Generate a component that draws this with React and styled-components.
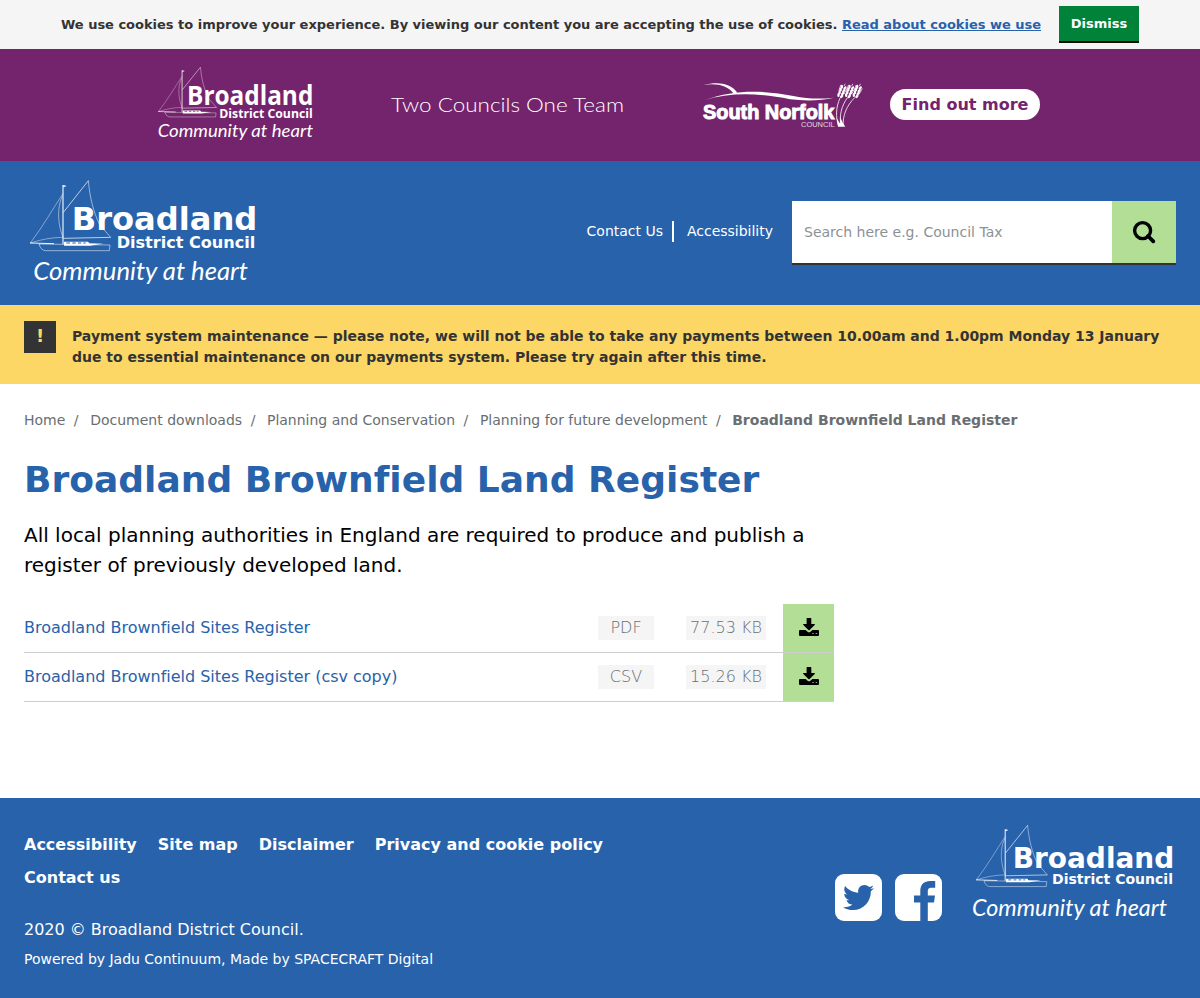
import React from "react";
import styled, { createGlobalStyle } from "styled-components";
import { FaTwitter } from "react-icons/fa";

const BLUE = "#2862ab";
const PURPLE = "#74246c";
const GREEN = "#b2df95";

const GlobalStyle = createGlobalStyle`
  *, *::before, *::after { box-sizing: border-box; }
  body { margin: 0; background: #fff; color: #000; font-family: "DejaVu Sans", sans-serif; font-size: 16px; line-height: 24px; }
  a { color: inherit; text-decoration: none; }
  svg { display: block; flex: none; }
`;

const Page = styled.div`
  display: flex;
  flex-direction: column;
  min-height: 998px;
`;

const CookieBar = styled.div`
  display: flex;
  justify-content: center;
  height: 49px;
  padding-top: 6px;
  background: #f5f5f5;
  color: #333;
  font-size: 13px;
  font-weight: bold;
  letter-spacing: -0.012px;
  line-height: 37px;
  white-space: nowrap;
`;

const CookieLink = styled.a`
  color: ${BLUE};
  text-decoration: underline;
`;

const DismissButton = styled.button`
  width: 80px;
  height: 37px;
  margin-left: 18px;
  padding: 0;
  border: 0;
  border-bottom: 2px solid #0b0c0c;
  background: #00823b;
  color: #fff;
  font: bold 13px "DejaVu Sans", sans-serif;
`;

const TeamBanner = styled.section`
  display: flex;
  align-items: flex-start;
  height: 112px;
  padding: 6px 0 0 140px;
  background: ${PURPLE};
`;

const TeamTitle = styled.svg`
  margin: 20px 0 0 50px;
`;

const NorfolkLogo = styled.svg`
  margin: 15px 0 0 50px;
`;

const FindOutMore = styled.a`
  width: 150px;
  height: 31px;
  margin: 34px 0 0 20px;
  border-radius: 16px;
  background: #fff;
  color: ${PURPLE};
  font-weight: bold;
  line-height: 31px;
  text-align: center;
`;

const Header = styled.header`
  display: flex;
  align-items: flex-start;
  height: 144px;
  padding: 9px 24px 0 20px;
  background: ${BLUE};
`;

const HeaderLinks = styled.nav`
  display: flex;
  margin: 51px 19px 0 auto;
  color: #fff;
  font-size: 14px;
  letter-spacing: -0.01px;
  line-height: 21px;

  a + a { margin-left: 9px; padding-left: 13px; border-left: 2px solid #fff; }
`;

const SearchBox = styled.form`
  display: flex;
  width: 384px;
  height: 64px;
  margin-top: 31px;
  border-bottom: 2px solid #333;
`;

const SearchInput = styled.input`
  flex: 1;
  min-width: 0;
  padding: 0 12px;
  border: 0;
  border-radius: 0;
  background: #fff;
  font: 14px "DejaVu Sans", sans-serif;

  &::placeholder { color: #8b9296; opacity: 1; }
`;

const SearchButton = styled.button`
  display: flex;
  align-items: center;
  justify-content: center;
  width: 64px;
  padding: 0;
  border: 0;
  background: ${GREEN};
`;

const Alert = styled.div`
  display: flex;
  align-items: flex-start;
  height: 79px;
  padding: 16px 24px 0;
  background: #fdd766;
`;

const AlertMark = styled.span`
  width: 32px;
  height: 32px;
  margin-right: 16px;
  background: #333;
  color: #fdd766;
  font-size: 18px;
  font-weight: bold;
  line-height: 30px;
  text-align: center;
`;

const AlertText = styled.p`
  flex: 1;
  margin: 5px 0 0;
  color: #333;
  font-size: 14px;
  font-weight: bold;
  letter-spacing: -0.011px;
  line-height: 21px;
`;

const Main = styled.main`
  flex: 1;
  padding: 26px 24px 0;
`;

const Breadcrumbs = styled.ol`
  display: flex;
  margin: 0;
  padding: 0;
  list-style: none;
  color: #696e72;
  font-size: 14px;
  line-height: 21px;
`;

const Crumb = styled.li`
  font-weight: ${(p) => (p.$current ? "bold" : "normal")};

  &:not(:last-child)::after { content: "/"; margin: 0 11.6px 0 8.5px; }
`;

const Title = styled.h1`
  margin: 25px 0 0;
  color: ${BLUE};
  font-size: 36px;
  letter-spacing: 0.02px;
  line-height: 48px;
`;

const Intro = styled.p`
  width: 810px;
  margin: 16px 0 24px;
  font-size: 20px;
  letter-spacing: -0.01px;
  line-height: 30px;
`;

const FileList = styled.ul`
  width: 810px;
  margin: 0;
  padding: 0;
  list-style: none;
`;

const FileRow = styled.li`
  display: flex;
  align-items: center;
  height: 49px;
  border-bottom: 1px solid #ccced0;
`;

const FileName = styled.a`
  flex: 1;
  color: ${BLUE};
  letter-spacing: -0.01px;
`;

const FileTag = styled.span`
  width: ${(p) => p.$width}px;
  margin-right: ${(p) => p.$gap}px;
  background: #f5f5f5;
  color: #696e72;
  font-weight: 200;
  text-align: center;
  white-space: nowrap;
`;

const DownloadButton = styled.a`
  display: flex;
  align-items: flex-start;
  justify-content: center;
  width: 51px;
  height: 48px;
  padding-top: 13px;
  background: ${GREEN};
`;

const Footer = styled.footer`
  display: flex;
  align-items: flex-start;
  height: 200px;
  padding: 17px 10px 0 24px;
  background: ${BLUE};
  color: #fff;
`;

const FooterText = styled.div`
  width: 620px;
  padding-top: 13px;
`;

const FooterLinks = styled.nav`
  display: flex;
  flex-wrap: wrap;
  column-gap: 21px;
  font-weight: bold;
  line-height: 33px;
`;

const Copyright = styled.p`
  margin: 24px 0 0;
  letter-spacing: -0.01px;
`;

const Powered = styled.p`
  margin: 7px 0 0;
  font-size: 14px;
  letter-spacing: -0.01px;
  line-height: 21px;
`;

const Socials = styled.div`
  display: flex;
  gap: 12.5px;
  margin: 59px 18px 0 auto;
`;

const SocialTile = styled.a`
  display: flex;
  align-items: ${(p) => (p.$bottom ? "flex-end" : "center")};
  justify-content: center;
  width: 47.5px;
  height: 47px;
  border-radius: 9px;
  background: #fff;
  color: ${BLUE};
`;

function Boat({ transform }) {
  return (
    <g transform={transform} fill="none" stroke="#fff" strokeWidth="2.6">
      <path d="M129 45V222" strokeWidth="4" opacity=".8" />
      <path d="M130 45l10 3-10 4z" fill="#fff" stroke="none" />
      <path d="M130 127L205 32" opacity=".8" />
      <path d="M205 32C209 80 220 126 239 164L272 202" opacity=".6" />
      <path d="M129 70C98 118 68 170 31 219C65 208 97 202 129 202" opacity=".5" />
      <path d="M127 78C108 118 116 171 129 202" opacity=".55" />
      <path d="M130 205L272 202" opacity=".8" />
      <path d="M30 219L102 221" strokeWidth="3" opacity=".9" />
      <path d="M57 222L270 225L268 242H76Q62 240 57 222" opacity=".6" />
      <path d="M132 215H204L208 220L250 221L210 227H132z" fill="#fff" stroke="none" />
      <path d="M139 219h11M157 219h10M174 219h10M190 219h7" stroke={BLUE} strokeWidth="3" />
    </g>
  );
}

function CouncilLogo({ width, height, boat, family, lines }) {
  const [name, kind, motto] = lines;
  return (
    <svg width={width} height={height} viewBox={`0 0 ${width * 3} ${height * 3}`} fill="#fff">
      <Boat transform={boat} />
      <g fontFamily={family} fontWeight="bold">
        <text x={name.x} y={name.y} fontSize={name.size} textLength={name.w} lengthAdjust="spacingAndGlyphs">Broadland</text>
        <text x={kind.x} y={kind.y} fontSize={kind.size} textLength={kind.w} lengthAdjust="spacingAndGlyphs">District Council</text>
      </g>
      <text x={motto.x} y={motto.y} fontSize={motto.size} textLength={motto.w} lengthAdjust="spacingAndGlyphs" fontFamily="Lato, sans-serif" fontStyle="italic">
        Community at heart
      </text>
    </svg>
  );
}

const stalks = [
  "M446 168C436 140 438 112 450 84",
  "M453 168C447 138 454 108 473 82",
  "M460 168C457 138 470 106 495 82",
];

const ears = [[449, 80], [472, 80], [495, 80]];

function SouthNorfolk() {
  return (
    <NorfolkLogo width="180" height="70" viewBox="0 0 540 210" fill="#fff">
      <path d="M40 45C82 35 120 38 142 68L130 70C112 47 82 39 40 45z" />
      <path d="M42 91C145 53 235 64 310 78C355 87 393 87 432 83C390 93 345 93 300 88C210 69 120 66 42 91z" />
      <text x="39" y="147" fontFamily="Liberation Sans, sans-serif" fontWeight="bold" fontSize="62" textLength="394" lengthAdjust="spacingAndGlyphs" stroke="#fff" strokeWidth="3">South Norfolk</text>
      <text x="333" y="170" fontFamily="Liberation Sans, sans-serif" fontSize="23" textLength="101" lengthAdjust="spacingAndGlyphs" opacity=".8">COUNCIL</text>
      <g fill="none" stroke="#fff" strokeWidth="2.4">
        {stalks.map((d) => <path key={d} d={d} />)}
      </g>
      <path d="M444 170L440 145L451 162L450 140L459 160L466 170z" />
      {ears.map(([x, y]) => (
        <g key={x} transform={`translate(${x} ${y}) rotate(22)`}>
          {[0, 1, 2, 3].map((i) => (
            <g key={i}>
              <ellipse cx="-5" cy={-3 - i * 9} rx="3.6" ry="6" transform={`rotate(-20 -5 ${-3 - i * 9})`} />
              <ellipse cx="5" cy={-3 - i * 9} rx="3.6" ry="6" transform={`rotate(20 5 ${-3 - i * 9})`} />
            </g>
          ))}
          <path d="M-9-16l-1-18M9-12l2-19M0-34l1-8" stroke="#fff" strokeWidth="2" />
        </g>
      ))}
    </NorfolkLogo>
  );
}

function DownloadIcon() {
  return (
    <svg width="20" height="20" viewBox="0 0 20 20">
      <path d="M7.6 1.4Q7.6 1 8 1h4Q12.3 1 12.3 1.4V7H15.5Q16.3 7.3 15.7 8L10.6 13Q10 13.5 9.4 13L4.3 8Q3.7 7.3 4.5 7H7.6z" />
      <path d="M1 13H6.6L8.6 14.8Q10 15.8 11.4 14.8L13.4 13H19Q20 13 20 14V18Q20 19 19 19H1Q0 19 0 18V14Q0 13 1 13z" />
      <path d="M13.3 15.9h1.4v1.2h-1.4zM16.7 15.9h1.4v1.2h-1.4z" fill={GREEN} opacity=".8" />
    </svg>
  );
}

const crumbs = ["Home", "Document downloads", "Planning and Conservation", "Planning for future development", "Broadland Brownfield Land Register"];
const files = [
  { name: "Broadland Brownfield Sites Register", type: "PDF", size: "77.53 KB" },
  { name: "Broadland Brownfield Sites Register (csv copy)", type: "CSV", size: "15.26 KB" },
];
const footerLinks = ["Accessibility", "Site map", "Disclaimer", "Privacy and cookie policy", "Contact us"];

export default function App() {
  return (
    <Page>
      <GlobalStyle />
      <CookieBar>
        <span>We use cookies to improve your experience. By viewing our content you are accepting the use of cookies. <CookieLink href="#">Read about cookies we use</CookieLink></span>
        <DismissButton>Dismiss</DismissButton>
      </CookieBar>
      <TeamBanner>
        <CouncilLogo
          width={190}
          height={100}
          boat="translate(33 14) scale(.723 .71)"
          family="Open Sans, sans-serif"
          lines={[
            { x: 141, y: 150, size: 78, w: 379 },
            { x: 238, y: 188, size: 37, w: 280 },
            { x: 53, y: 247, size: 54, w: 466 },
          ]}
        />
        <TeamTitle width="260" height="60" viewBox="0 0 260 60">
          <text x="11" y="37" fill="#fff" fontFamily="Lato, sans-serif" fontWeight="300" fontSize="20.5" textLength="233" lengthAdjust="spacingAndGlyphs">Two Councils One Team</text>
        </TeamTitle>
        <SouthNorfolk />
        <FindOutMore href="#">Find out more</FindOutMore>
      </TeamBanner>
      <Header>
        <CouncilLogo
          width={250}
          height={130}
          family="DejaVu Sans, sans-serif"
          lines={[
            { x: 155, y: 180, size: 96, w: 557 },
            { x: 290, y: 234, size: 48, w: 416 },
            { x: 40, y: 330, size: 76, w: 644 },
          ]}
        />
        <HeaderLinks>
          <a href="#">Contact Us</a>
          <a href="#">Accessibility</a>
        </HeaderLinks>
        <SearchBox>
          <SearchInput placeholder="Search here e.g. Council Tax" />
          <SearchButton type="button" aria-label="Search">
            <svg width="24" height="24" viewBox="0 0 24 24" fill="none" stroke="#000">
              <circle cx="10.6" cy="10.6" r="8" strokeWidth="3.4" />
              <path d="M16 16L21.3 21.3" strokeWidth="3.8" strokeLinecap="round" />
            </svg>
          </SearchButton>
        </SearchBox>
      </Header>
      <Alert>
        <AlertMark>!</AlertMark>
        <AlertText>Payment system maintenance — please note, we will not be able to take any payments between 10.00am and 1.00pm Monday 13 January due to essential maintenance on our payments system. Please try again after this time.</AlertText>
      </Alert>
      <Main>
        <Breadcrumbs>
          {crumbs.map((c, i) => <Crumb key={c} $current={i === crumbs.length - 1}>{c}</Crumb>)}
        </Breadcrumbs>
        <Title>Broadland Brownfield Land Register</Title>
        <Intro>All local planning authorities in England are required to produce and publish a register of previously developed land.</Intro>
        <FileList>
          {files.map((f) => (
            <FileRow key={f.name}>
              <FileName href="#">{f.name}</FileName>
              <FileTag $width={56} $gap={32}>{f.type}</FileTag>
              <FileTag $width={80} $gap={17}>{f.size}</FileTag>
              <DownloadButton href="#" aria-label="Download"><DownloadIcon /></DownloadButton>
            </FileRow>
          ))}
        </FileList>
      </Main>
      <Footer>
        <FooterText>
          <FooterLinks>
            {footerLinks.map((l) => <a key={l} href="#">{l}</a>)}
          </FooterLinks>
          <Copyright>2020 © Broadland District Council.</Copyright>
          <Powered>Powered by Jadu Continuum, Made by SPACECRAFT Digital</Powered>
        </FooterText>
        <Socials>
          <SocialTile href="#" aria-label="Twitter">
            <FaTwitter size={31} />
          </SocialTile>
          <SocialTile href="#" aria-label="Facebook" $bottom>
            <svg width="47.5" height="47" viewBox="0 0 47.5 47" fill="currentColor">
              <path d="M25.3 47V28.5H19V21.5H25.3V17C25.3 10.5 29 7 35.2 7H40.2V13.7H36.7C33.5 13.7 32.8 15.1 32.8 17.7V21.5H40L39 28.5H32.8V47z" />
            </svg>
          </SocialTile>
        </Socials>
        <CouncilLogo
          width={230}
          height={120}
          boat="translate(21.5 3) scale(.885 .875)"
          family="DejaVu Sans, sans-serif"
          lines={[
            { x: 158, y: 158, size: 85, w: 485 },
            { x: 276, y: 207, size: 42, w: 363 },
            { x: 36, y: 304, size: 69, w: 585 },
          ]}
        />
      </Footer>
    </Page>
  );
}
